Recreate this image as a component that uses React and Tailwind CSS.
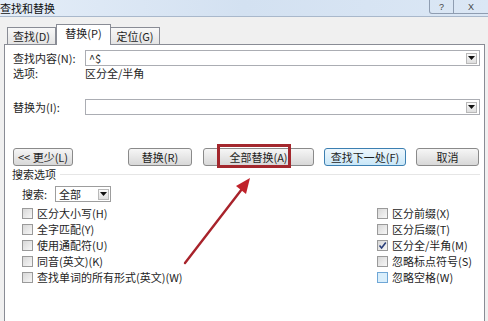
import React from "react";

function Checkbox({ checked, hover }) {
  return (
    <span
      className={
        hover
          ? "w-[11px] h-[11px] shrink-0 border border-[#6fa7d6] bg-[#d9eefb] flex items-center justify-center"
          : "w-[11px] h-[11px] shrink-0 border border-[#9a9a9a] bg-linear-to-br from-[#d8d8d8] to-[#f7f7f7] flex items-center justify-center"
      }
    >
      {checked && (
        <svg width="9" height="9" viewBox="0 0 9 9">
          <path d="M1.5 4.5 L3.6 7 L7.8 1.5" fill="none" stroke="#2a3f7a" strokeWidth="1.6" />
        </svg>
      )}
    </span>
  );
}

function Check({ label, checked, hover }) {
  return (
    <div className="h-[16px] flex items-center gap-[4px]">
      <Checkbox checked={checked} hover={hover} />
      <span className="leading-none">{label}</span>
    </div>
  );
}

function DropBtn() {
  return (
    <span className="w-[11px] h-[11px] border border-[#b9b9b9] bg-linear-to-b from-[#fafafa] to-[#dedede] flex items-center justify-center">
      <svg width="7" height="4" viewBox="0 0 7 4">
        <path d="M0 0 L7 0 L3.5 4 Z" fill="#111" />
      </svg>
    </span>
  );
}

function Btn({ w, children, def }) {
  return (
    <div
      className={
        (def
          ? "border-[#3c7fb1] bg-linear-to-b from-[#eef7fd] to-[#c9e7f8] "
          : "border-[#8a8a8a] bg-linear-to-b from-[#f6f6f6] to-[#d8d8d8] ") +
        w +
        " h-[18px] border rounded-[3px] flex items-center justify-center leading-none"
      }
    >
      {children}
    </div>
  );
}

export default function App() {
  return (
    <div className="w-[488px] h-[321px] relative overflow-hidden bg-[#f0f0f0] text-[11px] text-[#1e1e1e] font-['Noto_Sans_CJK_SC','Noto_Sans',sans-serif] flex flex-col">
      {/* title bar */}
      <div className="h-[17px] shrink-0 flex items-start bg-linear-to-r from-[#e4edf8] via-[#d3e1f1] to-[#dbe7f5] border-b border-[#a9b8cb]">
        <span className="mt-[2px] leading-[13px] text-[11px] text-[#111]">查找和替换</span>
        <div className="ml-auto flex h-[14px]">
          <div className="w-[25px] h-full border border-t-0 border-[#8f9db1] rounded-bl-[3px] flex items-center justify-center text-[9px] leading-[10px] text-[#444] font-['Liberation_Sans',sans-serif]">?</div>
          <div className="w-[34px] h-full border-b border-[#8f9db1] flex items-center justify-center text-[9px] leading-[10px] text-[#444] font-['Liberation_Sans',sans-serif]">X</div>
        </div>
      </div>

      {/* tabs */}
      <div className="h-[27px] shrink-0 flex items-end pl-[7px]">
        <div className="w-[49px] h-[17px] border border-b-0 border-[#898c95] bg-linear-to-b from-[#f8f8f8] to-[#e4e4e4] flex items-center justify-center leading-none">查找(D)</div>
        <div className="w-[55px] h-[21px] border border-b-0 border-[#898c95] bg-white flex items-start pt-[3px] justify-center leading-none -mb-px relative z-10">替换(P)</div>
        <div className="w-[49px] h-[17px] border border-b-0 border-l-0 border-[#898c95] bg-linear-to-b from-[#f8f8f8] to-[#e4e4e4] flex items-center justify-center leading-none">定位(G)</div>
      </div>

      {/* panel */}
      <div className="flex-1 ml-[4px] w-[481px] bg-white border border-b-0 border-[#898c95] flex flex-col pr-[4px]">
        {/* find */}
        <div className="mt-[5px] h-[16px] flex items-center">
          <span className="pl-[8px] w-[80px] leading-none">查找内容(N):</span>
          <div className="flex-1 h-[16px] border border-[#abadb3] flex items-center pl-[3px] pr-[2px]">
            <span className="leading-none">^$</span>
            <span className="ml-auto"><DropBtn /></span>
          </div>
        </div>
        <div className="h-[14px] flex items-center">
          <span className="pl-[8px] w-[80px] leading-none">选项:</span>
          <span className="leading-none">区分全/半角</span>
        </div>

        {/* replace */}
        <div className="mt-[19px] h-[16px] flex items-center">
          <span className="pl-[8px] w-[80px] leading-none">替换为(I):</span>
          <div className="flex-1 h-[16px] border border-[#abadb3] flex items-center pr-[2px]">
            <span className="ml-auto"><DropBtn /></span>
          </div>
        </div>

        {/* buttons */}
        <div className="mt-[33px] flex items-center">
          <div className="ml-[8px]"><Btn w="w-[60px]">&lt;&lt; 更少(L)</Btn></div>
          <div className="ml-[55px]"><Btn w="w-[64px]">替换(R)</Btn></div>
          <div className="ml-[11px]"><Btn w="w-[111px]">全部替换(A)</Btn></div>
          <div className="ml-[10px]"><Btn w="w-[82px]" def>查找下一处(F)</Btn></div>
          <div className="ml-[10px]"><Btn w="w-[63px]">取消</Btn></div>
        </div>

        {/* search options */}
        <div className="mt-px h-[14px] flex items-center pl-[7px]">
          <span className="leading-none">搜索选项</span>
          <span className="flex-1 ml-[4px] h-px bg-[#e6e6e6]"></span>
        </div>
        <div className="mt-[5px] h-[16px] flex items-center pl-[17px]">
          <span className="w-[33px] leading-none">搜索:</span>
          <div className="w-[56px] h-[16px] border border-[#9d9d9d] flex items-center pl-[3px] pr-[1px]">
            <span className="leading-none">全部</span>
            <span className="ml-auto"><DropBtn /></span>
          </div>
        </div>

        <div className="mt-[3px] flex">
          <div className="ml-[17px] w-[355px] flex flex-col">
            <Check label="区分大小写(H)" />
            <Check label="全字匹配(Y)" />
            <Check label="使用通配符(U)" />
            <Check label="同音(英文)(K)" />
            <Check label="查找单词的所有形式(英文)(W)" />
          </div>
          <div className="flex flex-col">
            <Check label="区分前缀(X)" />
            <Check label="区分后缀(T)" />
            <Check label="区分全/半角(M)" checked />
            <Check label="忽略标点符号(S)" />
            <Check label="忽略空格(W)" hover />
          </div>
        </div>
      </div>

      {/* highlight box */}
      <div className="absolute left-[217px] top-[144px] w-[74px] h-[24px] border-[3px] border-[#a3272d] pointer-events-none"></div>

      {/* arrow */}
      <svg className="absolute left-0 top-0 pointer-events-none" width="488" height="321" viewBox="0 0 488 321">
        <line x1="185" y1="263" x2="242" y2="189" stroke="#a8232b" strokeWidth="2.4" strokeLinecap="round" />
        <polygon points="250,178 246,194 236,186" fill="#c0222b" />
      </svg>
    </div>
  );
}
